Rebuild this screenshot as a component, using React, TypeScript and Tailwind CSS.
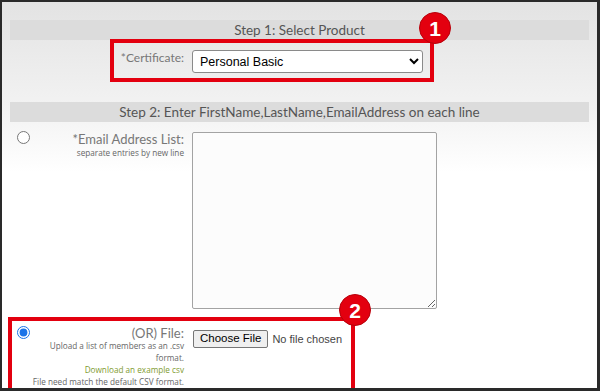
import React from "react";

const head = "font-['Lato','Open_Sans',sans-serif]";
const label = "font-['Lato','Open_Sans',sans-serif]";
const small = "font-['Open_Sans','Lato',sans-serif]";

function Badge({ n, className }: { n: string; className: string }) {
    return (
        <div
            className={
                "absolute w-[32px] h-[32px] rounded-full bg-[#e3000f] border border-[#b8000a] flex items-center justify-center text-white text-[21px] font-bold font-['Liberation_Sans',Arial,sans-serif] leading-none " +
                className
            }
        >
            {n}
        </div>
    );
}

export default function App() {
    return (
        <div className="relative w-[600px] h-[391px] overflow-hidden border-l-2 border-t-2 border-r-[3px] border-b-[3px] border-[#2a2a2a] bg-[linear-gradient(#e3e3e3,#f3f3f3_110px,#ffffff_170px)] pt-[18px] pl-[8px] pr-[8px]">
            {/* step 1 */}
            <div className={"h-[20px] bg-[#dcdcdc] text-center text-[13.5px] leading-[20px] text-[#555] " + head}>
                Step 1: Select Product
            </div>
            <div className="flex mt-[10px]">
                <div className={"w-[174px] text-right text-[12px] leading-[14px] pt-[1px] text-[#777] " + label}>
                    *Certificate:
                </div>
                <select
                    defaultValue="Personal Basic"
                    className="ml-[8px] w-[231px] h-[23px] border border-[#8a8a8a] rounded-[3px] bg-white pl-[3px] text-[12.5px] text-black font-['Liberation_Sans',Arial,sans-serif]"
                >
                    <option>Personal Basic</option>
                    <option>Personal Pro</option>
                </select>
            </div>

            {/* step 2 */}
            <div className={"mt-[29px] h-[20px] bg-[#dcdcdc] text-center text-[13.5px] leading-[20px] text-[#555] " + head}>
                Step 2: Enter FirstName,LastName,EmailAddress on each line
            </div>
            <div className="flex mt-[10px]">
                <div className="w-[174px] flex">
                    <input type="radio" name="src" className="ml-[7px] mt-[-1px] w-[13px] h-[13px]" />
                    <div className="flex-1 text-right">
                        <div className={"text-[13px] leading-[14px] text-[#777] " + label}>*Email Address List:</div>
                        <div className={"mt-[2px] text-[8.2px] leading-[10px] text-[#666] " + small}>
                            separate entries by new line
                        </div>
                    </div>
                </div>
                <textarea className="ml-[8px] w-[245px] h-[177px] border border-[#a3a3a3] rounded-[2px] bg-[#fcfcfc]" />
            </div>

            <div className="flex mt-[17px]">
                <div className="w-[174px] flex">
                    <input
                        type="radio"
                        name="src"
                        defaultChecked
                        className="ml-[7px] w-[13px] h-[13px] accent-[#1a73e8]"
                    />
                    <div className="flex-1 text-right">
                        <div className={"text-[13px] leading-[14px] text-[#777] " + label}>(OR) File:</div>
                        <div className={"text-[8.2px] leading-[12px] text-[#666] " + small}>
                            <div>Upload a list of members as an .csv</div>
                            <div>format.</div>
                            <div className="text-[#7f9b2f]">Download an example csv</div>
                            <div>File need match the default CSV format.</div>
                        </div>
                    </div>
                </div>
                <div className="ml-[9px] mt-[4px] flex items-center h-[18px] font-['Liberation_Sans',Arial,sans-serif] text-[11.5px]">
                    <button className="h-[18px] px-[6px] border border-[#767676] rounded-[2px] bg-[#efefef] text-black leading-none">
                        Choose File
                    </button>
                    <span className="ml-[4px] text-[#444] text-[11px]">No file chosen</span>
                </div>
            </div>

            {/* annotations */}
            <div className="absolute left-[108px] top-[37px] w-[324px] h-[43px] border-4 border-[#e3000f]" />
            <Badge n="1" className="left-[417px] top-[10px]" />
            <div className="absolute left-[6px] top-[315px] w-[347px] h-[120px] border-4 border-[#e3000f]" />
            <Badge n="2" className="left-[337px] top-[292px]" />
        </div>
    );
}
